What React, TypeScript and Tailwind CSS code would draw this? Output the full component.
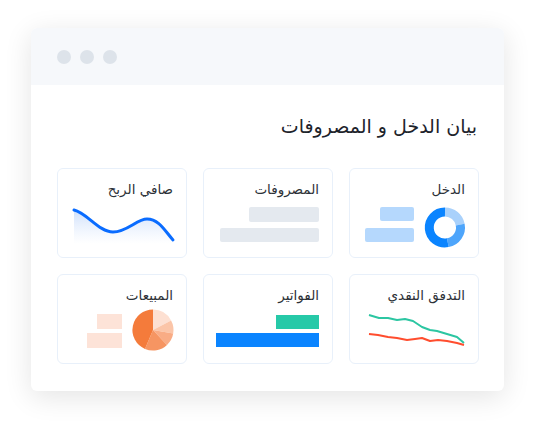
import React from "react";

const font = { fontFamily: '"DejaVu Sans", sans-serif' };

function Card({ label, children }: { label: string; children: React.ReactNode }) {
  return (
    <div className="h-[90px] w-[130px] rounded-md border border-[#e8f0fa] bg-white flex flex-col">
      <div dir="rtl" className="h-[31px] pt-[10px] pr-[13px] text-[13.5px] leading-[20px] text-[#2d3238] text-right">
        {label}
      </div>
      <svg width="128" height="57" viewBox="1 1 128 57" className="block">
        {children}
      </svg>
    </div>
  );
}

export default function App() {
  return (
    <div className="w-[535px] h-[425px] bg-white pt-[28px] pl-[31px]" style={font}>
      <div className="w-[473px] h-[363px] rounded-md bg-white shadow-[0_6px_28px_rgba(0,0,0,0.11)] overflow-hidden">
        <div className="h-[57px] bg-[#f6f8fb] flex items-center pl-[26px] gap-[9px]">
          <div className="w-[14px] h-[14px] rounded-full bg-[#dde3ea]" />
          <div className="w-[14px] h-[14px] rounded-full bg-[#dde3ea]" />
          <div className="w-[14px] h-[14px] rounded-full bg-[#dde3ea]" />
        </div>
        <div dir="rtl" className="pr-[27px] pt-[28px] h-[83px] text-[19px] leading-[27px] font-medium text-[#1d232b]">
          بيان الدخل و المصروفات
        </div>
        <div dir="rtl" className="grid grid-cols-[130px_130px_130px] gap-x-[16px] gap-y-[16px] pr-[25px]">
          <Card label="الدخل">
            <rect x="31" y="8" width="34" height="14" rx="2" fill="#b5d8fd" />
            <rect x="16" y="29" width="49" height="14" rx="2" fill="#b5d8fd" />
            <path d="M96 13 A15.5 15.5 0 0 1 111.2 25.54" stroke="#a9d1fb" strokeWidth="9" fill="none" />
            <path d="M111.2 25.54 A15.5 15.5 0 0 1 98.8 43.7" stroke="#4ea5fb" strokeWidth="9" fill="none" />
            <path d="M98.8 43.7 A15.5 15.5 0 1 1 96 13" stroke="#0a84ff" strokeWidth="9" fill="none" />
          </Card>
          <Card label="المصروفات">
            <rect x="46" y="8" width="70" height="15" rx="2" fill="#e4e9ef" />
            <rect x="17" y="29" width="99" height="14" rx="2" fill="#e4e9ef" />
          </Card>
          <Card label="صافي الربح">
            <defs>
              <linearGradient id="wg" x1="0" y1="0" x2="0" y2="1">
                <stop offset="0" stopColor="#cfe0fb" />
                <stop offset="1" stopColor="#ffffff" stopOpacity="0.6" />
              </linearGradient>
            </defs>
            <path
              d="M17 11 C 30 14, 42 33, 56 33 C 70 33, 80 20, 90 20 C 102 20, 108 32, 116 41 L116 45 L17 45 Z"
              fill="url(#wg)"
            />
            <path
              d="M17 11 C 30 14, 42 33, 56 33 C 70 33, 80 20, 90 20 C 102 20, 108 32, 116 41"
              stroke="#0a6cff"
              strokeWidth="3"
              fill="none"
              strokeLinecap="round"
            />
          </Card>
          <Card label="التدفق النقدي">
            <polyline
              points="20,10 30,13 39,13 48,15 56,14 64,16 73,22 81,25 88,26 98,29 108,32 115,38"
              stroke="#2cc6a2"
              strokeWidth="2"
              fill="none"
              strokeLinejoin="round"
            />
            <polyline
              points="20,29 29,30 39,32 48,33 58,35 66,34 73,33 81,36 89,35 98,36 108,38 115,40"
              stroke="#ff4d2e"
              strokeWidth="2"
              fill="none"
              strokeLinejoin="round"
            />
          </Card>
          <Card label="الفواتير">
            <rect x="73" y="10" width="43" height="14" fill="#26c9a8" />
            <rect x="13" y="28" width="103" height="14" fill="#0a84ff" />
          </Card>
          <Card label="المبيعات">
            <rect x="40" y="9" width="25" height="15" fill="#fde3d8" />
            <rect x="30" y="28" width="35" height="15" fill="#fde3d8" />
            <path d="M96 25 L96 4.5 A20.5 20.5 0 0 1 114.1 15.4 Z" fill="#fde0d2" />
            <path d="M96 25 L114.1 15.4 A20.5 20.5 0 0 1 116.2 28.6 Z" fill="#fbc5a8" />
            <path d="M96 25 L116.2 28.6 A20.5 20.5 0 0 1 110 40 Z" fill="#f9ac85" />
            <path d="M96 25 L110 40 A20.5 20.5 0 0 1 88 43.9 Z" fill="#f69562" />
            <path d="M96 25 L88 43.9 A20.5 20.5 0 0 1 96 4.5 Z" fill="#f47b3b" />
          </Card>
        </div>
      </div>
    </div>
  );
}
